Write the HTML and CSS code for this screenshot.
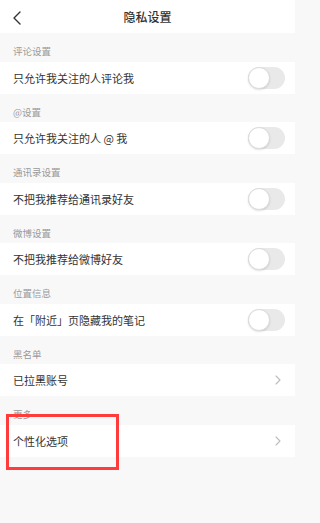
FILE: index.html
```html
<!DOCTYPE html>
<html lang="zh-CN">
<head>
<meta charset="utf-8">
<title>隐私设置</title>
<link rel="stylesheet" href="styles.css">
</head>
<body>
<div class="page">
  <header class="nav">
    <svg class="back" width="10" height="14" viewBox="0 0 10 14"><path d="M8 1 L2 7 L8 13" fill="none" stroke="#333" stroke-width="1.4" stroke-linecap="round" stroke-linejoin="round"/></svg>
    <div class="title">隐私设置</div>
  </header>

  <div class="label">评论设置</div>
  <div class="row"><span class="text">只允许我关注的人评论我</span><span class="switch"><span class="knob"></span></span></div>

  <div class="label">@设置</div>
  <div class="row"><span class="text">只允许我关注的人 @ 我</span><span class="switch"><span class="knob"></span></span></div>

  <div class="label">通讯录设置</div>
  <div class="row"><span class="text">不把我推荐给通讯录好友</span><span class="switch"><span class="knob"></span></span></div>

  <div class="label">微博设置</div>
  <div class="row"><span class="text">不把我推荐给微博好友</span><span class="switch"><span class="knob"></span></span></div>

  <div class="label">位置信息</div>
  <div class="row"><span class="text">在「附近」页隐藏我的笔记</span><span class="switch"><span class="knob"></span></span></div>

  <div class="label">黑名单</div>
  <div class="row"><span class="text">已拉黑账号</span><svg class="chev" width="6" height="10" viewBox="0 0 6 10"><path d="M1 1 L5 5 L1 9" fill="none" stroke="#bdbdbd" stroke-width="1.1" stroke-linecap="round" stroke-linejoin="round"/></svg></div>

  <div class="label">更多</div>
  <div class="row"><span class="text">个性化选项</span><svg class="chev" width="6" height="10" viewBox="0 0 6 10"><path d="M1 1 L5 5 L1 9" fill="none" stroke="#bdbdbd" stroke-width="1.1" stroke-linecap="round" stroke-linejoin="round"/></svg></div>

  <div class="highlight"></div>
</div>
</body>
</html>
```

FILE: styles.css
```css
html, body {
  margin: 0;
  padding: 0;
}
body {
  background: #f8f8f8;
  font-family: "Noto Sans CJK SC", "Noto Sans", sans-serif;
  color: #333;
}
.page {
  position: relative;
  width: 295px;
  min-height: 523px;
}
.nav {
  height: 33px;
  background: #fff;
  display: flex;
  align-items: center;
  justify-content: center;
  position: relative;
}
.back {
  position: absolute;
  left: 12px;
  top: 11px;
}
.title {
  font-size: 12px;
  font-weight: 500;
  color: #333;
  letter-spacing: 0;
}
.label {
  height: 28.5px;
  box-sizing: border-box;
  padding: 12px 0 0 13px;
  font-size: 9.5px;
  line-height: 13px;
  color: #999;
}
.row {
  height: 32px;
  background: #fff;
  display: flex;
  align-items: center;
  justify-content: space-between;
  padding: 0 10px 0 13px;
}
.text {
  font-size: 11px;
  color: #333;
}
.switch {
  width: 37px;
  height: 22px;
  border-radius: 11px;
  background: #e9e9e9;
  position: relative;
  display: block;
}
.knob {
  position: absolute;
  left: 0;
  top: 0;
  width: 22px;
  height: 22px;
  box-sizing: border-box;
  border-radius: 50%;
  background: #fff;
  border: 1px solid #dcdcdc;
  box-shadow: 0 1px 2px rgba(0,0,0,0.12);
}
.chev {
  margin-right: 4px;
}
.highlight {
  position: absolute;
  left: 6px;
  top: 414px;
  width: 113px;
  height: 56px;
  box-sizing: border-box;
  border: 3px solid #ff3b3b;
}
```
